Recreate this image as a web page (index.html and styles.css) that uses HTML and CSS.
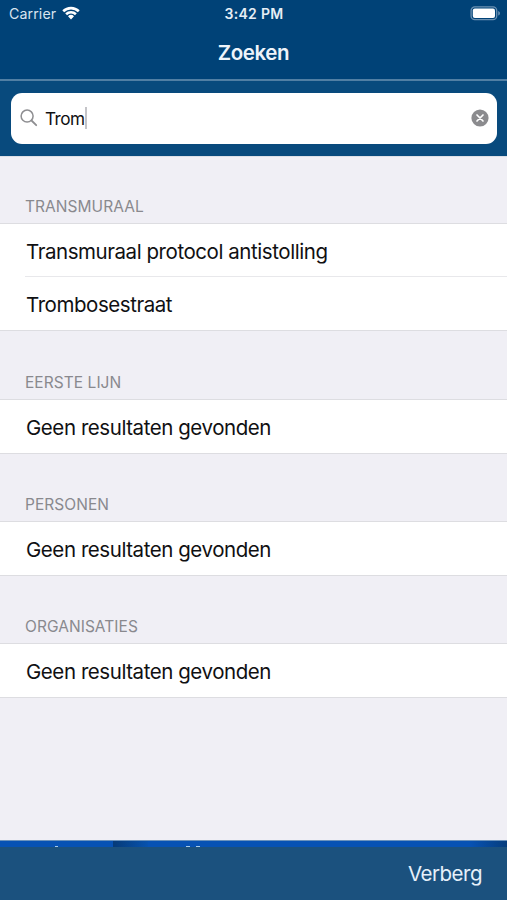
FILE: index.html
```html
<!DOCTYPE html>
<html lang="nl">
<head>
<meta charset="utf-8">
<meta name="viewport" content="width=device-width, initial-scale=1">
<title>Zoeken</title>
<link rel="stylesheet" href="styles.css">
</head>
<body>
<div class="app">
  <header class="navbar">
    <div class="status">
      <div class="carrier"><span class="carrier-name">Carrier</span>
        <svg class="wifi" viewBox="0 0 18 14" width="18" height="14"><path d="M.3 4.3a12.5 12.5 0 0 1 17.4 0L15.9 6.2a9.9 9.9 0 0 0-13.8 0ZM3.2 7.3a8.3 8.3 0 0 1 11.6 0L13 9.2a5.7 5.7 0 0 0-8 0ZM6 10.2a4.3 4.3 0 0 1 6 0L9 13.4Z" fill="#fff"/></svg>
      </div>
      <div class="time">3:42 PM</div>
      <svg class="battery" viewBox="0 0 31 15" width="31" height="15"><rect x="1.1" y=".9" width="25.6" height="12.8" rx="3.7" fill="none" stroke="#6b91b2" stroke-width="1.3"/><rect x="2.8" y="2.6" width="22.2" height="9.4" rx="2" fill="#fff"/><path d="M28.2 5v4.6c2.4-.9 2.4-3.7 0-4.6Z" fill="#6b91b2"/></svg>
    </div>
    <h1 class="title">Zoeken</h1>
  </header>
  <div class="search-area">
    <div class="search">
      <svg class="lens" viewBox="0 0 18 18" width="18" height="18" fill="none" stroke="#8e8e91" stroke-width="1.5" stroke-linecap="round"><circle cx="7.1" cy="7.1" r="6"/><path d="m11.5 11.5 4.7 4.7" stroke-width="1.8"/></svg>
      <span class="query">Trom</span><span class="caret"></span>
      <svg class="clear" viewBox="0 0 18 18" width="18" height="18"><circle cx="9" cy="9" r="8.6" fill="#8b8b8e"/><path d="m6 6 6 6m0-6-6 6" stroke="#fff" stroke-width="1.7" stroke-linecap="round"/></svg>
    </div>
  </div>
  <main class="results">
    <section>
      <h2 class="heading first">TRANSMURAAL</h2>
      <ul class="list"><li class="row short">Transmuraal protocol antistolling</li><li class="row">Trombosestraat</li></ul>
    </section>
    <section>
      <h2 class="heading second">EERSTE LIJN</h2>
      <ul class="list"><li class="row">Geen resultaten gevonden</li></ul>
    </section>
    <section>
      <h2 class="heading">PERSONEN</h2>
      <ul class="list"><li class="row">Geen resultaten gevonden</li></ul>
    </section>
    <section>
      <h2 class="heading">ORGANISATIES</h2>
      <ul class="list"><li class="row">Geen resultaten gevonden</li></ul>
    </section>
  </main>
  <div class="strip"><i class="dot d1"></i><i class="dot d2"></i><i class="dot d3"></i></div>
  <footer class="toolbar"><span class="hide">Verberg</span></footer>
</div>
</body>
</html>
```
FILE: styles.css
```css
* { box-sizing: border-box; }
body { margin: 0; font-family: Inter, "Liberation Sans", sans-serif; background: #f0eff5; color: #101012; }
.app { display: flex; flex-direction: column; height: 900px; }
svg { display: block; flex: none; }
.navbar { height: 81px; flex: none; background: #004277; border-bottom: 2px solid #517fa4; color: #fff; }
.status { display: grid; grid-template-columns: 1fr auto 1fr; align-items: center; height: 27px; padding: 0 6px 0 9px; }
.carrier { display: flex; align-items: center; gap: 6px; }
.carrier-name { font-size: 14.2px; letter-spacing: .1px; color: #d9e5ef; }
.wifi { margin-top: -2px; }
.time { margin-left: -2px; font-size: 14px; font-weight: 600; letter-spacing: .3px; color: #e6eef5; }
.battery { justify-self: end; }
.title { margin: 0; font-size: 20.5px; font-weight: 600; line-height: 51px; text-align: center; letter-spacing: -.4px; color: #eef4fa; }
.search-area { height: 75px; flex: none; padding: 12px 10px 0 11px; background: #084a7d; }
.search { display: flex; align-items: center; height: 51px; padding: 0 8px 2px 9px; background: #fff; border-radius: 11px; }
.query { margin-left: 7px; padding-top: 1px; font-size: 17.2px; letter-spacing: -.5px; }
.caret { width: 2px; height: 22px; background: #c4c4c8; }
.clear { margin-left: auto; }
.results { flex: 1; min-height: 0; border-top: 1px solid #dcdfe6; }
.heading { display: flex; align-items: flex-end; height: 67px; margin: 0; padding: 0 0 6px 25px; font-size: 15.5px; line-height: 20px; font-weight: 400; letter-spacing: .05px; color: #89898e; }
.first { height: 66px; }
.second { height: 68px; }
.list { margin: 0; padding: 0; list-style: none; background: #fff; border-top: 1px solid #dddde1; border-bottom: 1px solid #dddde1; }
.row { display: flex; align-items: center; height: 53px; padding: 2px 0 0 26px; font-size: 20.5px; letter-spacing: -.44px; }
.short { height: 52px; padding-top: 3px; }
.row + .row { height: 54px; margin-left: 25px; padding-left: 1px; border-top: 1px solid #e8e8eb; }
.strip { position: relative; height: 7px; flex: none; border-top: 1px solid #6d94bd; background: linear-gradient(90deg, transparent 113px, #063b78 113px, #0752ae 148px, transparent 148px), linear-gradient(90deg, #0752b4 470px, #063d7c 507px); }
.dot { position: absolute; bottom: 0; width: 4px; height: 1px; background: #a9cbea; }
.d1 { left: 55px; width: 3px; }
.d2 { left: 186px; }
.d3 { left: 196px; }
.toolbar { display: flex; align-items: center; justify-content: flex-end; height: 53px; flex: none; padding-right: 25px; background: #1b517e; color: #e6f0fa; font-size: 20.5px; letter-spacing: -.5px; }
```
